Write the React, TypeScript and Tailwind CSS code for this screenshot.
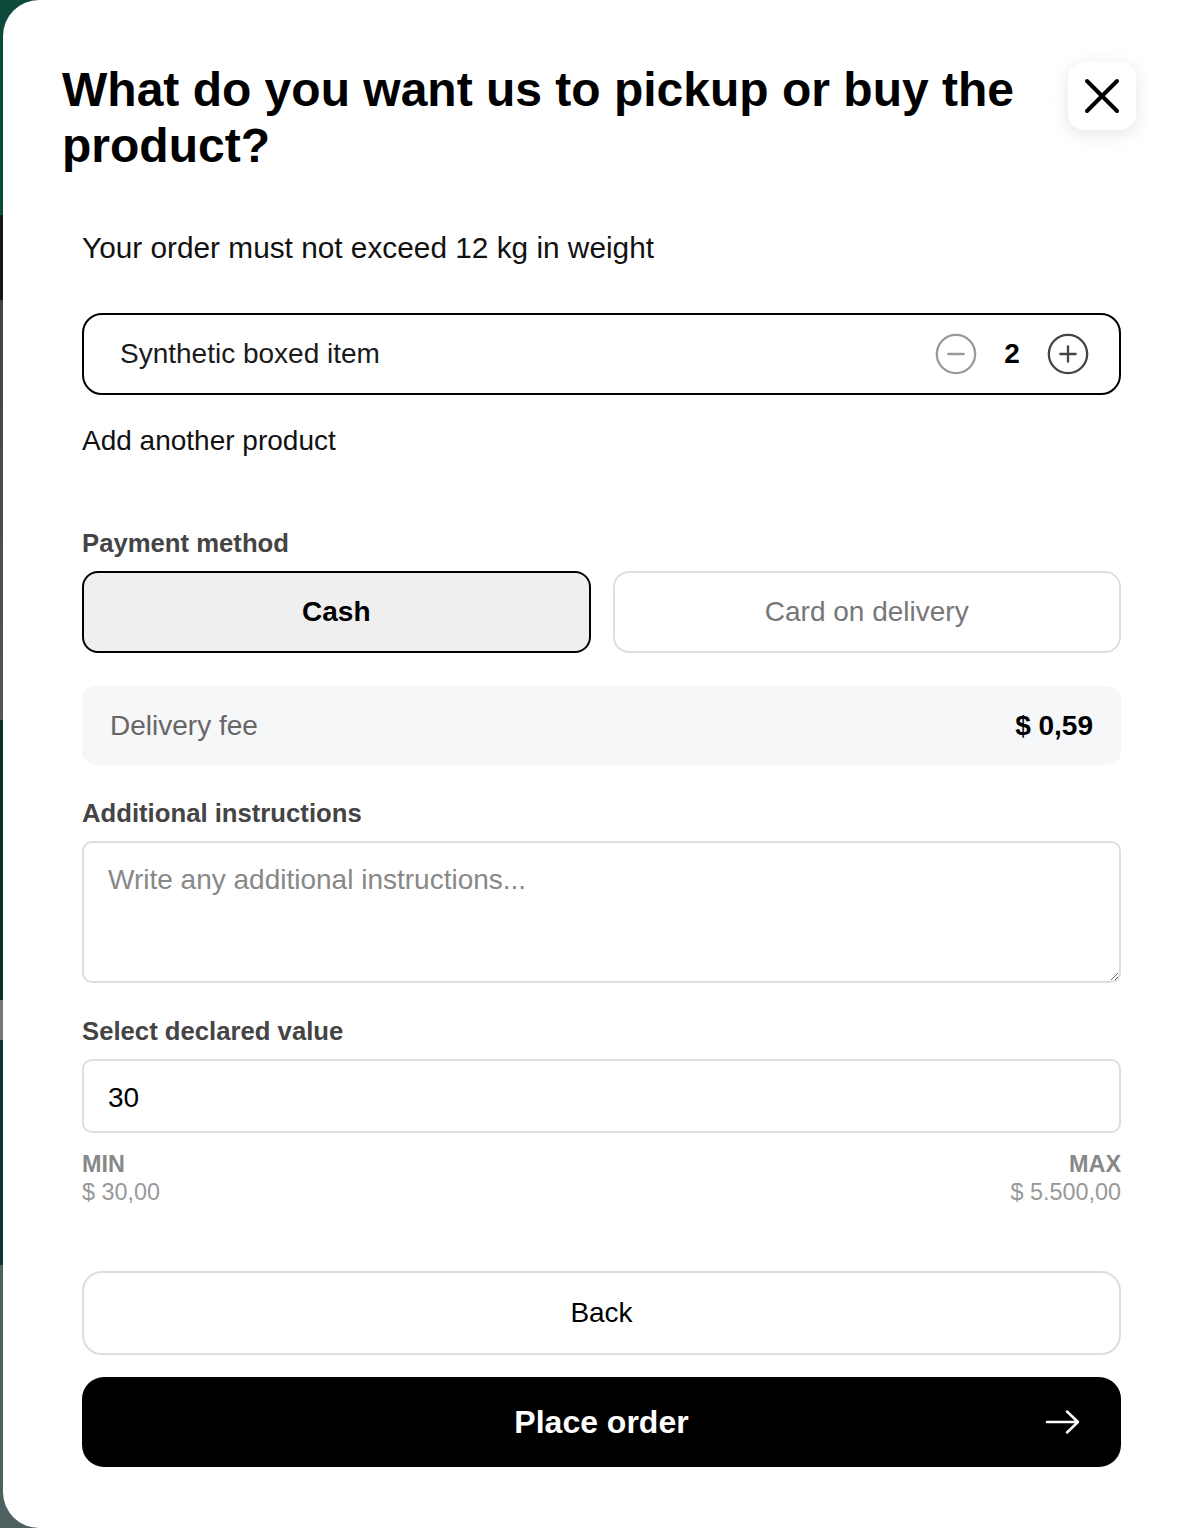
import { CircleMinus, CirclePlus } from "lucide-react"

const CloseIcon = () => (
    <svg width="36" height="36" viewBox="0 0 36 36" fill="none">
        <path d="M3 3 L33 33 M33 3 L3 33" stroke="#000" strokeWidth="4" strokeLinecap="round" />
    </svg>
)

const ArrowIcon = () => (
    <svg width="36" height="26" viewBox="0 0 36 26" fill="none">
        <path d="M2 13 H33 M22 2.5 L33 13 L22 23.5" stroke="#fff" strokeWidth="2.5" strokeLinecap="round" strokeLinejoin="round" />
    </svg>
)

export default function App() {
    return (
        <div className="min-h-[1528px] w-full bg-[linear-gradient(#0c4a3b_0px,#0c4a3b_215px,#161616_215px,#161616_300px,#444_300px,#555_720px,#0a2f28_720px,#0a2f28_1000px,#777_1000px,#777_1040px,#0c3536_1040px,#0c3536_1265px,#4e605f_1265px)] font-['Liberation_Sans',Arial,sans-serif]">
            <div className="ml-[3px] min-h-[1528px] rounded-l-[36px] bg-white pl-[59px] pr-[66px] pt-[62px] pb-[61px]">
                {/* header */}
                <div className="flex items-start justify-between gap-6">
                    <h2 className="text-[48px] font-bold leading-[56px] text-black">
                        What do you want us to pickup or buy the product?
                    </h2>
                    <button className="flex h-[68px] w-[68px] shrink-0 items-center justify-center rounded-[16px] bg-white shadow-[0_4px_18px_rgba(0,0,0,0.10)]">
                        <CloseIcon />
                    </button>
                </div>

                <div className="ml-[20px] mr-[15px] flex flex-col">
                    <p className="mt-[57px] text-[29.8px] leading-[34px] text-[#111]">Your order must not exceed 12 kg in weight</p>

                    {/* product row */}
                    <div className="mt-[48px] flex h-[82px] items-center rounded-[20px] border-2 border-black pl-[36px] pr-[28px]">
                        <span className="flex-1 text-[28px] text-[#1a1a1a]">Synthetic boxed item</span>
                        <div className="flex items-center">
                            <CircleMinus size={46} strokeWidth={1.2} className="text-[#9a9a9a]" />
                            <span className="w-[66px] text-center text-[28px] font-bold text-black">2</span>
                            <CirclePlus size={46} strokeWidth={1.2} className="text-[#444]" />
                        </div>
                    </div>

                    <p className="mt-[29px] text-[28px] leading-[34px] text-[#111]">Add another product</p>

                    <p className="mt-[70px] text-[25.7px] font-bold leading-[30px] text-[#444]">Payment method</p>
                    <div className="mt-[13px] grid grid-cols-2 gap-[22px]">
                        <button className="h-[82px] rounded-[16px] border-2 border-black bg-[#efefef] text-[28px] font-bold text-black">Cash</button>
                        <button className="h-[82px] rounded-[16px] border-2 border-[#dedede] bg-white text-[28px] text-[#777]">Card on delivery</button>
                    </div>

                    <div className="mt-[33px] flex h-[79px] items-center justify-between rounded-[14px] bg-[#f6f7f9] px-[28px]">
                        <span className="text-[28px] text-[#666]">Delivery fee</span>
                        <span className="text-[28px] font-bold text-black">$ 0,59</span>
                    </div>

                    <p className="mt-[33px] text-[25.7px] font-bold leading-[30px] text-[#444]">Additional instructions</p>
                    <textarea
                        placeholder="Write any additional instructions..."
                        className="mt-[13px] h-[142px] rounded-[10px] border-2 border-[#dedede] px-[24px] py-[20px] text-[28px] leading-[34px] text-[#111] outline-none placeholder:text-[#888]"
                    />

                    <p className="mt-[33px] text-[25.7px] font-bold leading-[30px] text-[#444]">Select declared value</p>
                    <input
                        readOnly
                        value="30"
                        className="mt-[13px] h-[74px] rounded-[10px] border-2 border-[#dedede] px-[24px] pt-[3px] text-[28px] text-black outline-none"
                    />

                    <div className="mt-[17px] flex justify-between">
                        <div className="flex flex-col">
                            <span className="text-[23.4px] font-bold leading-[28px] text-[#888]">MIN</span>
                            <span className="text-[23.4px] leading-[28px] text-[#999]">$ 30,00</span>
                        </div>
                        <div className="flex flex-col items-end">
                            <span className="text-[23.4px] font-bold leading-[28px] text-[#888]">MAX</span>
                            <span className="text-[23.4px] leading-[28px] text-[#999]">$ 5.500,00</span>
                        </div>
                    </div>

                    <button className="mt-[65px] h-[84px] rounded-[20px] border-2 border-[#dedede] bg-white text-[28px] text-black">Back</button>
                    <button className="mt-[22px] flex h-[90px] items-center rounded-[22px] bg-black px-[40px] text-white">
                        <span className="w-[36px]" />
                        <span className="flex-1 text-center text-[32px] font-bold">Place order</span>
                        <ArrowIcon />
                    </button>
                </div>
            </div>
        </div>
    )
}
